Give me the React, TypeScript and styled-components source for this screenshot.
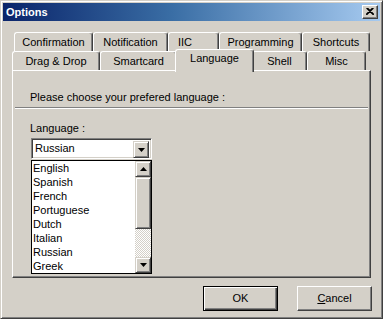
import React from "react";
import styled, { createGlobalStyle } from "styled-components";

const GlobalStyle = createGlobalStyle`
  html, body { margin: 0; padding: 0; background: #d4d0c8; }
  body { font-family: "Liberation Sans", Arial, sans-serif; font-size: 11px; color: #000; }
  * { box-sizing: border-box; }
`;

const Window = styled.div`
  width: 383px;
  height: 319px;
  background: #d4d0c8;
  border: 1px solid;
  border-color: #d4d0c8 #404040 #404040 #d4d0c8;
  box-shadow: inset 1px 1px #fff, inset -1px -1px #808080;
  padding: 2px;
  display: flex;
  flex-direction: column;
`;

const TitleBar = styled.div`
  height: 18px;
  background: linear-gradient(90deg, #0a246a 0%, #3a6ea5 45%, #a6caf0 100%);
  display: flex;
  align-items: center;
  justify-content: space-between;
  padding: 0 2px 0 3px;
`;

const Title = styled.span`
  color: #fff;
  font-weight: bold;
  font-size: 11px;
  line-height: 13px;
`;

const CloseButton = styled.div`
  width: 16px;
  height: 14px;
  background: #d4d0c8;
  border: 1px solid;
  border-color: #fff #404040 #404040 #fff;
  box-shadow: inset -1px -1px #808080;
  display: flex;
  align-items: center;
  justify-content: center;
  padding: 0 0 1px 0;
`;

const Body = styled.div`
  flex: 1;
  display: flex;
  flex-direction: column;
  padding: 11px 9px 0 9px;
`;

const TabRow = styled.div<{ $offset: number; $height: number }>`
  display: flex;
  height: ${(p) => p.$height}px;
  margin-left: ${(p) => p.$offset}px;
  align-items: flex-end;
`;

const Tab = styled.div<{ $w: number; $active?: boolean; $indent?: number }>`
  width: ${(p) => p.$w}px;
  height: ${(p) => (p.$active ? "calc(100% + 4px)" : "100%")};
  margin: ${(p) => (p.$active ? "0 -2px -2px -2px" : "0")};
  flex: none;
  position: relative;
  z-index: ${(p) => (p.$active ? 2 : 0)};
  background: #d4d0c8;
  border-top: 1px solid #fff;
  border-left: 1px solid #fff;
  border-right: 1px solid #404040;
  border-radius: 3px 3px 0 0;
  box-shadow: inset -1px 0 #808080;
  display: flex;
  justify-content: ${(p) => (p.$indent ? "flex-start" : "center")};
  padding-left: ${(p) => p.$indent ?? 0}px;
  padding-top: ${(p) => (p.$active ? 2 : 3)}px;
  line-height: 13px;
  white-space: nowrap;
`;

const Panel = styled.div`
  height: 208px;
  background: #d4d0c8;
  border: 1px solid;
  border-color: #fff #404040 #404040 #fff;
  box-shadow: inset -1px -1px #808080;
  display: flex;
  flex-direction: column;
  padding: 0 1px;
`;

const Heading = styled.div`
  padding: 20px 0 0 16px;
  line-height: 13px;
`;

const Separator = styled.div`
  margin: 3px 1px 0 1px;
  height: 2px;
  border-top: 1px solid #808080;
  border-bottom: 1px solid #fff;
`;

const Content = styled.div`
  display: flex;
  flex-direction: column;
  padding-left: 16px;
`;

const Label = styled.div`
  margin-top: 13px;
  line-height: 13px;
`;

const Combo = styled.div`
  margin: 3px 0 0 1px;
  width: 121px;
  height: 21px;
  background: #fff;
  border: 1px solid;
  border-color: #808080 #fff #fff #808080;
  box-shadow: inset 1px 1px #404040, inset -1px -1px #d4d0c8;
  padding: 2px;
  display: flex;
  align-items: stretch;
`;

const ComboText = styled.div`
  flex: 1;
  line-height: 15px;
  padding-left: 1px;
`;

const RaisedButton = styled.div<{ $h: number }>`
  width: 16px;
  height: ${(p) => p.$h}px;
  flex: none;
  background: #d4d0c8;
  border: 1px solid;
  border-color: #d4d0c8 #404040 #404040 #d4d0c8;
  box-shadow: inset 1px 1px #fff, inset -1px -1px #808080;
  display: flex;
  align-items: center;
  justify-content: center;
`;

const ListBox = styled.div`
  margin: 1px 0 0 1px;
  width: 121px;
  height: 114px;
  background: #fff;
  border: 1px solid #000;
  display: flex;
`;

const Items = styled.div`
  flex: 1;
  display: flex;
  flex-direction: column;
`;

const Item = styled.div`
  height: 14px;
  line-height: 14px;
  padding-left: 1px;
  white-space: nowrap;
`;

const ScrollBar = styled.div`
  width: 16px;
  display: flex;
  flex-direction: column;
`;

const Track = styled.div`
  flex: 1;
  background: repeating-conic-gradient(#fff 0 25%, #d4d0c8 0 50%) 0 0 / 2px 2px;
`;

const ButtonRow = styled.div`
  display: flex;
  justify-content: flex-end;
  gap: 19px;
  margin: 8px -1px 0 0;
`;

const DialogButton = styled.div<{ $default?: boolean }>`
  width: 75px;
  height: 25px;
  background: #d4d0c8;
  border: 1px solid;
  border-color: ${(p) => (p.$default ? "#000" : "#fff #404040 #404040 #fff")};
  box-shadow: ${(p) =>
    p.$default
      ? "inset 1px 1px #fff, inset -1px -1px #404040, inset -2px -2px #808080"
      : "inset -1px -1px #808080"};
  display: flex;
  align-items: center;
  justify-content: center;
  line-height: 13px;
`;

const Arrow = ({ up }: { up?: boolean }) => (
  <svg width="7" height="4" viewBox="0 0 7 4" style={{ display: "block" }}>
    <polygon points={up ? "3.5,0 7,4 0,4" : "0,0 7,0 3.5,4"} fill="#000" />
  </svg>
);

const CloseGlyph = () => (
  <svg width="8" height="7" viewBox="0 0 8 7" style={{ display: "block" }}>
    <path d="M0.5 0 L7.5 7 M1.5 0 L8 6.5 M7.5 0 L0.5 7 M6.5 0 L0 6.5" stroke="#000" strokeWidth="1.1" />
  </svg>
);

const row1: { label: string; w: number; indent?: number }[] = [
  { label: "Confirmation", w: 79 },
  { label: "Notification", w: 75 },
  { label: "IIC", w: 51, indent: 9 },
  { label: "Programming", w: 83 },
  { label: "Shortcuts", w: 68 },
];

const row2 = [
  { label: "Drag & Drop", w: 88 },
  { label: "Smartcard", w: 77 },
  { label: "Language", w: 79, active: true },
  { label: "Shell", w: 55 },
  { label: "Misc", w: 59 },
];

const languages = ["English", "Spanish", "French", "Portuguese", "Dutch", "Italian", "Russian", "Greek"];

export default function App() {
  return (
    <>
      <GlobalStyle />
      <Window>
        <TitleBar>
          <Title>Options</Title>
          <CloseButton>
            <CloseGlyph />
          </CloseButton>
        </TitleBar>
        <Body>
          <TabRow $offset={2} $height={19}>
            {row1.map((t) => (
              <Tab key={t.label} $w={t.w} $indent={t.indent}>
                {t.label}
              </Tab>
            ))}
          </TabRow>
          <TabRow $offset={0} $height={19}>
            {row2.map((t) => (
              <Tab key={t.label} $w={t.w} $active={t.active}>
                {t.label}
              </Tab>
            ))}
          </TabRow>
          <Panel>
            <Heading>Please choose your prefered language :</Heading>
            <Separator />
            <Content>
              <Label>Language :</Label>
              <Combo>
                <ComboText>Russian</ComboText>
                <RaisedButton $h={17}>
                  <Arrow />
                </RaisedButton>
              </Combo>
              <ListBox>
                <Items>
                  {languages.map((l) => (
                    <Item key={l}>{l}</Item>
                  ))}
                </Items>
                <ScrollBar>
                  <RaisedButton $h={16}>
                    <Arrow up />
                  </RaisedButton>
                  <RaisedButton $h={52} />
                  <Track />
                  <RaisedButton $h={16}>
                    <Arrow />
                  </RaisedButton>
                </ScrollBar>
              </ListBox>
            </Content>
          </Panel>
          <ButtonRow>
            <DialogButton $default>OK</DialogButton>
            <DialogButton>
              <span>
                <u>C</u>ancel
              </span>
            </DialogButton>
          </ButtonRow>
        </Body>
      </Window>
    </>
  );
}
